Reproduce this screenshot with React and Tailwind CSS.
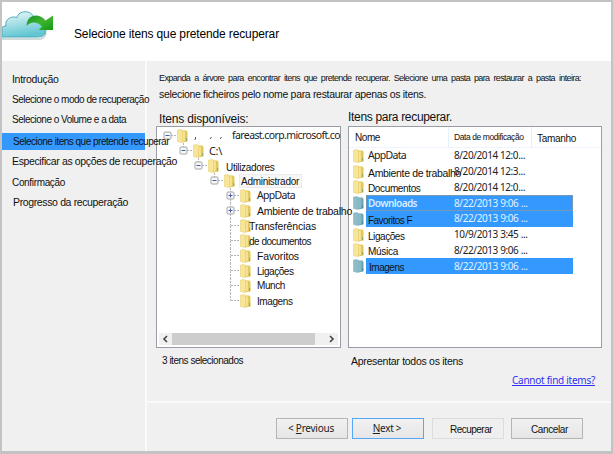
import React, { useLayoutEffect, useRef, useState } from 'react';

const ui = "font-['Liberation_Sans',Arial,sans-serif]";
const segoe = "font-['Noto_Sans','Open_Sans',sans-serif]";

// One line of text whose letter spacing is adjusted to fill the given width.
function Line({ w, className = '', children }) {
  const ref = useRef(null);
  const [spacing, setSpacing] = useState(0);
  useLayoutEffect(() => {
    const el = ref.current;
    const natural = el.getBoundingClientRect().width;
    setSpacing((w - natural) / el.textContent.length);
  }, [w]);
  return (
    <div className={`w-max whitespace-nowrap ${className}`}>
      <span ref={ref} style={{ letterSpacing: spacing }}>{children}</span>
    </div>
  );
}

function Folder({ selected }) {
  const [back, front, edge] = selected
    ? ['#6fa5b5', '#8dbcc8', '#7fb0be']
    : ['#e3c75c', '#f7e698', '#e6cb68'];
  return (
    <svg className="shrink-0" width="11" height="14" viewBox="0 0 11 14">
      <path d="M4.5 1.500H9.500L10.500 3V12.500L5 13.500Z" fill={back} />
      <path d="M.5 1 4 .5 5.6 1.5V13L4.6 13.6 .5 12.5Z" fill={front} stroke={edge} strokeWidth=".5" />
      <path d="M5.6 2.500 8 2V12L5.6 13Z" fill={front} stroke={edge} strokeWidth=".4" />
      <path d="M9.6 9V12" stroke={selected ? '#4a8ea0' : '#8aa76a'} />
    </svg>
  );
}

function Branch({ kind, last, first }) {
  const boxed = kind !== 'leaf';
  return (
    <svg className="shrink-0" width="14" height="15" viewBox="0 0 14 15">
      {!first && <path d="M4.5 0V7.5" stroke="#b4b4b4" strokeDasharray="2 1" />}
      {!last && <path d="M4.5 8V15" stroke="#b4b4b4" strokeDasharray="2 1" />}
      <path d="M5 7.5H13" stroke="#b4b4b4" strokeDasharray="2 1" />
      {boxed && <rect x="1" y="4" width="7" height="7" rx="1" fill="#f7f7f7" stroke="#a6a6a6" />}
      {boxed && <path d="M2.5 7.5H6.5" stroke="#4460a8" />}
      {kind === 'plus' && <path d="M4.5 5.5V9.5" stroke="#4460a8" />}
    </svg>
  );
}

const steps = [
  ['Introdução', 46.5, 'h-[21px] pl-[10px] text-[10.5px]'],
  ['Selecione o modo de recuperação', 137, 'h-[19px] pl-[10px] text-[10px]'],
  ['Selecione o Volume e a data', 114, 'h-[21px] pl-[10px] text-[10px]'],
  ['Selecione itens que pretende recuperar', 156, 'h-[21px] pl-[11px] text-[10px]'],
  ['Especificar as opções de recuperação', 165, 'h-[22px] pl-[10px] text-[10.5px]'],
  ['Confirmação', 53, 'h-[18px] pl-[10px] text-[10px]'],
  ['Progresso da recuperação', 115, 'h-[24px] pl-[11px] text-[10.5px]'],
];

const children = [
  ['AppData', 38, 'plus', `ml-[6px] text-[10.5px] text-[#222] ${segoe}`],
  ['Ambiente de trabalho', 95, 'plus', 'ml-[6px] pt-[2px] text-[10.5px]'],
  ['Transferências', 67, 'leaf', '-ml-[2px] pt-[2px] text-[10.5px]'],
  ['de documentos', 62, 'leaf', '-ml-[2px] pt-[1px] text-[10px]'],
  ['Favoritos', 42, 'leaf', 'ml-[6px] pt-[2px] text-[10.5px]'],
  ['Ligações', 36.5, 'leaf', 'ml-[6px] pt-[1px] text-[10px]'],
  ['Munch', 28, 'leaf', 'ml-[6px] text-[10px]'],
  ['Imagens', 35.5, 'leaf', 'ml-[6px] pt-[1px] text-[10px]'],
];

const files = [
  ['AppData', 38, '8/20/2014 12:0...', 71, false, `text-[10.5px] text-[#222] ${segoe}`],
  ['Ambiente de trabalho', 93, '8/20/2014 12:3...', 71, false, 'pt-[4px] text-[10.5px]'],
  ['Documentos', 52.5, '8/20/2014 12:0...', 71, false, 'pt-[2px] text-[10px]'],
  ['Downloads', 49, '8/22/2013 9:06 ...', 73.5, true, `text-[10px] font-semibold text-[#d9ecff] ${segoe}`],
  ['Favoritos F', 44, '8/22/2013 9:06 ...', 73.5, true, 'pt-[3px] text-[10px]'],
  ['Ligações', 36.5, '10/9/2013 3:45 ...', 73.5, false, 'pt-[3px] text-[10px]'],
  ['Música', 30, '8/22/2013 9:06 ...', 73.5, false, 'pt-[2px] text-[10px]'],
  ['Imagens', 35, '8/22/2013 9:06 ...', 73.5, true, 'pl-[1px] pt-[3px] text-[10px]'],
];

function CloudLogo() {
  return (
    <svg className="mt-[7px] shrink-0" width="54" height="36" viewBox="0 0 54 36">
      <defs>
        <linearGradient id="cloud" x1="0" y1="0" x2=".3" y2="1">
          <stop offset="0" stopColor="#effbfc" />
          <stop offset=".5" stopColor="#a8e0e6" />
          <stop offset="1" stopColor="#62c6d2" />
        </linearGradient>
        <linearGradient id="arrow" x1="0" y1="0" x2="1" y2="1">
          <stop offset="0" stopColor="#178f25" />
          <stop offset=".5" stopColor="#3fb52f" />
          <stop offset="1" stopColor="#129a13" />
        </linearGradient>
      </defs>
      <path d="M0 30H38Q43 29 44 24" fill="none" stroke="#cfdadb" strokeWidth="2" />
      <path d="M0 28V18.500C1 17.500 2.500 17 4 17C2.500 10.500 9 6.500 15 8.500C16.500 1 30 .5 32 9C37 7.500 41 10 40.500 15.500C46 19 45 28 36 28Z" fill="url(#cloud)" stroke="#4bacbb" />
      <path d="M24.500 17C25 5 37 3.500 43.500 11.500L51 6.500V21H37L40 17.500C35 12 28.500 12.500 24.500 17Z" fill="url(#arrow)" />
    </svg>
  );
}

export default function App() {
  return (
    <div className={`flex h-[454px] w-[613px] flex-col overflow-hidden border-2 border-b-[3px] border-[#c3c3c3] bg-[#f0f0f0] text-[#111] ${ui}`}>
      <header className="flex h-[59px] shrink-0 bg-white">
        <CloudLogo />
        <Line w={205} className="ml-[18px] mt-[23px] text-[12px] leading-[18px] text-black">
          Selecione itens que pretende recuperar
        </Line>
      </header>

      <div className="flex min-h-0 flex-1">
        <nav className="relative z-20 w-[145px] shrink-0 border-r-2 border-[#fafafa] pt-[8px]">
          {steps.map(([text, w, cls], i) => (
            <div key={text} className={`flex items-center ${cls}`}>
              {i === 3 ? (
                <div className="-ml-[11px] mt-[2px] flex h-[17px] w-[143px] shrink-0 items-center bg-[#3399ff] pl-[11px]">
                  <Line w={w}>{text}</Line>
                </div>
              ) : (
                <Line w={w}>{text}</Line>
              )}
            </div>
          ))}
        </nav>

        <main className="flex min-w-0 flex-1 flex-col">
          <div className="h-[342px] shrink-0 border-b-2 border-[#fafafa] pl-[11px]">
            <Line w={422} className="ml-px pt-[10px] text-[9px] leading-[14px] [word-spacing:2px]">
              Expanda a árvore para encontrar itens que pretende recuperar. Selecione uma pasta para restaurar a pasta inteira:
            </Line>
            <Line w={267} className="ml-px pt-[1px] text-[10.500px] leading-[16px]">
              selecione ficheiros pelo nome para restaurar apenas os itens.
            </Line>

            <div className="mt-[6px] flex h-[18px] leading-[18px]">
              <div className="w-[190px] pl-px pt-[2px]">
                <Line w={89.500} className="text-[12px]">Itens disponíveis:</Line>
              </div>
              <Line w={104} className="text-[12px]">Itens para recuperar.</Line>
            </div>

            <div className="-ml-[2px] flex gap-[7px]">
              <section className="relative z-10 flex h-[222px] w-[185px] shrink-0 flex-col border border-[#9a9da6] bg-white pt-px leading-[13px]">
                <div className="flex h-[15px] items-center pl-[6px]">
                  <Branch kind="minus" first last />
                  <Folder />
                  <svg className="ml-[6px] shrink-0" width="38" height="15" viewBox="0 0 38 15">
                    <path d="M1.500 9V11L.5 12M17.500 9 16 11M27.500 9 26 11" stroke="#555" fill="none" />
                  </svg>
                  <Line w={108} className={`text-[10.500px] text-[#222] ${segoe}`}>fareast.corp.microsoft.co</Line>
                </div>
                <div className="flex h-[15px] items-center pl-[22px]">
                  <Branch kind="minus" last />
                  <Folder />
                  <Line w={13} className={`ml-[5px] text-[11px] text-[#222] ${segoe}`}>C:\</Line>
                </div>
                <div className="flex h-[15px] items-center pl-[37px]">
                  <Branch kind="minus" last />
                  <Folder />
                  <Line w={48.500} className="ml-[7px] pt-[3px] text-[10px]">Utilizadores</Line>
                </div>
                <div className="flex h-[15px] items-center pl-[53px]">
                  <Branch kind="minus" last />
                  <Folder />
                  <div className="ml-[4px] mt-px h-[14px] w-[63px] border border-[#ececec] bg-[#f7f7f7] pl-[1px]">
                    <Line w={58} className="text-[10px]">Administrador</Line>
                  </div>
                </div>
                {children.map(([text, w, kind, cls], i) => (
                  <div key={text} className="flex h-[15px] items-center pl-[69px]">
                    <Branch kind={kind} last={i === children.length - 1} />
                    <Folder />
                    <Line w={w} className={cls}>{text}</Line>
                  </div>
                ))}
                <div className="mx-[2px] mb-[2px] mt-auto flex h-[12px] items-center bg-[#f0f0f0]">
                  <svg width="13" height="12" viewBox="0 0 13 12"><path d="M8 3 5 6 8 9" fill="none" stroke="#444" strokeWidth="1.600" /></svg>
                  <div className="h-full w-[143px] bg-[#cdcdcd]" />
                  <svg className="ml-auto" width="13" height="12" viewBox="0 0 13 12"><path d="M5 3 8 6 5 9" fill="none" stroke="#444" strokeWidth="1.600" /></svg>
                </div>
              </section>

              <section className="h-[222px] w-[254px] shrink-0 border border-[#9a9da6] bg-white leading-[13px]">
                <div className="flex h-[21px] border-b border-[#eef4fb]">
                  <div className="w-[100px] border-r border-[#e3effa] pl-[6px] pt-[4px] text-[10px]">
                    <Line w={25}>Nome</Line>
                  </div>
                  <div className="w-[83px] border-r border-[#e3effa] pl-[5px] pt-[4px] text-[8.500px]">
                    <Line w={69.500}>Data de modificação</Line>
                  </div>
                  <div className="pl-[5px] pt-[5px] text-[10px]">
                    <Line w={39}>Tamanho</Line>
                  </div>
                </div>
                {files.map(([name, w, date, dw, selected, cls], i) => (
                  <div key={name} className="flex h-[15.750px] items-center pl-[4px]">
                    <Folder selected={selected} />
                    <div className={`ml-[2px] flex h-full w-[207px] items-center border ${selected ? 'bg-[#3399ff]' : ''} ${i === 3 ? 'border-[#7899b5]' : 'border-transparent'}`}>
                      <div className="w-[87px] shrink-0 pl-[1px]">
                        <Line w={w} className={cls}>{name}</Line>
                      </div>
                      <Line w={dw} className={`text-[10px] ${segoe} ${selected ? 'text-[#e4f1ff]' : 'text-[#222]'}`}>{date}</Line>
                    </div>
                  </div>
                ))}
              </section>
            </div>

            <div className="flex pt-[6px] leading-[14px]">
              <div className="w-[189px] pl-[4px] text-[10px]">
                <Line w={81}>3 itens selecionados</Line>
              </div>
              <Line w={112} className="ml-[4px] text-[10.500px]">Apresentar todos os itens</Line>
            </div>
            <Line w={83} className={`ml-[354px] mt-[4px] text-[10px] leading-[16px] text-[#3030f0] underline ${segoe}`}>
              Cannot find items?
            </Line>
          </div>

          <footer className="flex pl-[129px] pt-[15px] text-[10px]">
            <button className={`mr-[4px] flex h-[21px] w-[72px] items-center justify-center border border-[#b5b5b5] bg-linear-to-b from-[#f1f1f1] to-[#e6e6e6] pr-[2px] text-[10px] text-[#222] ${segoe}`}>
              <Line w={46}>&lt; <u>P</u>revious</Line>
            </button>
            <button className={`mr-[8px] flex h-[21px] w-[72px] items-center justify-center border border-[#55a8f8] bg-linear-to-b from-[#f1f1f1] to-[#e6e6e6] pr-[2px] text-[10px] text-[#222] ${segoe}`}>
              <Line w={28.500}><u>N</u>ext &gt;</Line>
            </button>
            <button className="mr-[7px] flex h-[21px] w-[72px] items-center border border-[#dcdcdc] bg-[#efefef] pl-[17px] pt-[2px]">
              <Line w={42}>Recuperar</Line>
            </button>
            <button className="flex h-[21px] w-[72px] items-center border border-[#b5b5b5] bg-linear-to-b from-[#f1f1f1] to-[#e6e6e6] pl-[19px] pt-[2px]">
              <Line w={37}>Cancelar</Line>
            </button>
          </footer>
        </main>
      </div>
    </div>
  );
}
